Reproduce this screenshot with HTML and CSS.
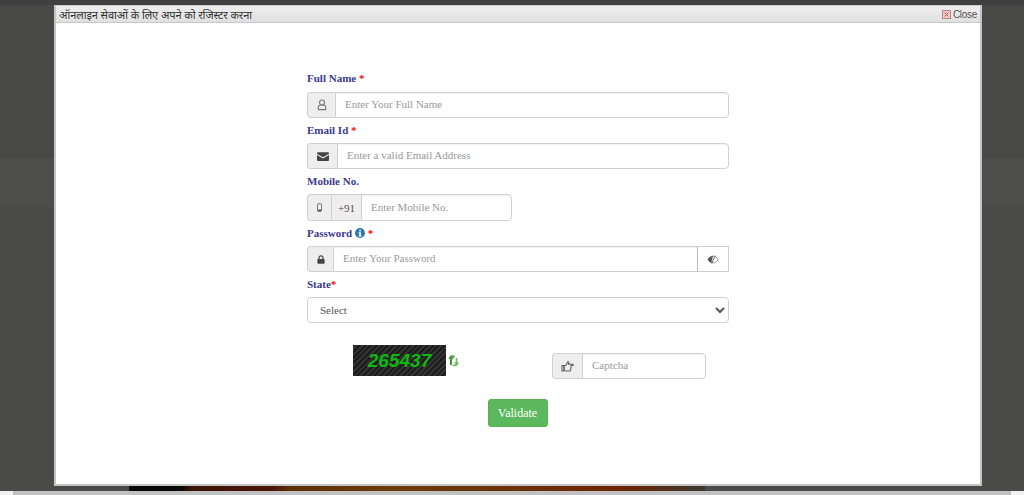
FILE: index.html
```html
<!DOCTYPE html>
<html lang="hi">
<head>
<meta charset="utf-8">
<title>Register</title>
<link rel="stylesheet" href="styles.css">
</head>
<body>
<div class="backdrop">
  <div class="band band-top"></div>
  <div class="band band-mid"></div>
  <div class="band band-low"></div>
  <div class="strip"></div>
</div>
<div class="scrollbar"><div class="scroll-thumb"></div></div>
<div class="modal">
  <div class="modal-title">
    <span class="modal-heading">ऑनलाइन सेवाओं के लिए अपने को रजिस्टर करना</span>
    <span class="modal-close">
      <svg class="close-icon" viewBox="0 0 9 9" width="9" height="9"><rect x="0.5" y="0.5" width="8" height="8" fill="#f3c9c9" stroke="#b08a8a"/><path d="M2.5 2.5l4 4M6.500 2.500l-4 4" stroke="#b55" fill="none"/></svg>
      <span>Close</span>
    </span>
  </div>
  <form class="form">
    <label class="label label-first">Full Name <em>*</em></label>
    <div class="group">
      <span class="addon addon-user"><svg viewBox="0 0 12 14" width="10" height="12"><circle cx="6" cy="4" r="3" fill="none" stroke="#777" stroke-width="1.300"/><path d="M1.500 12.500v-2.500a3 3 0 0 1 3-3h3a3 3 0 0 1 3 3v2.500z" fill="none" stroke="#777" stroke-width="1.300" stroke-linejoin="round"/></svg></span>
      <input class="field" placeholder="Enter Your Full Name">
    </div>
    <label class="label">Email Id <em>*</em></label>
    <div class="group">
      <span class="addon addon-mail"><svg viewBox="0 0 12 9" width="12" height="9"><path d="M0 1.200a1 1 0 0 1 1-1h10a1 1 0 0 1 1 1v.5L6 5.300 0 1.700zM0 3l6 3.600L12 3v5a1 1 0 0 1-1 1H1a1 1 0 0 1-1-1z" fill="#444"/></svg></span>
      <input class="field" placeholder="Enter a valid Email Address">
    </div>
    <label class="label">Mobile No.</label>
    <div class="group group-mobile">
      <span class="addon addon-phone"><svg viewBox="0 0 6 10" width="5" height="9"><rect x="0.500" y="0.500" width="5" height="9" rx="1" fill="none" stroke="#555"/><rect x="1" y="7.500" width="4" height="2" fill="#555"/></svg></span>
      <span class="addon addon-code">+91</span>
      <input class="field" placeholder="Enter Mobile No.">
    </div>
    <label class="label">Password <svg class="info" viewBox="0 0 10 10" width="10" height="10"><circle cx="5" cy="5" r="5" fill="#2f76b5"/><rect x="4.200" y="1.700" width="1.700" height="1.600" fill="#fff"/><path d="M3.500 4.200h2.400v3.200h.7v1H3.500v-1h.7V5.200h-.7z" fill="#fff"/></svg> <em>*</em></label>
    <div class="group">
      <span class="addon addon-lock"><svg viewBox="0 0 10 11" width="8" height="9"><path d="M2.500 5V3.500a2.500 2.500 0 0 1 5 0V5" fill="none" stroke="#444" stroke-width="1.500"/><rect x="0.500" y="4.800" width="9" height="6" rx="1" fill="#444"/></svg></span>
      <input class="field field-pass" placeholder="Enter Your Password">
      <span class="addon-eye"><svg viewBox="0 0 14 10" width="12" height="9"><path d="M1 5c1.500-2.500 3.500-4 6-4s4.500 1.500 6 4c-1.500 2.500-3.500 4-6 4S2.500 7.500 1 5z" fill="none" stroke="#888"/><path d="M1 5c1.500-2.500 3-4 6-4L5 9C3.500 8.500 2 7 1 5z" fill="#555"/><path d="M9.500 0.500L5.500 9.500" stroke="#555"/></svg></span>
    </div>
    <label class="label">State<em>*</em></label>
    <select class="select"><option>Select</option></select>
    <div class="captcha-row">
      <div class="captcha-pic">
        <span class="captcha-img">265437</span>
        <svg class="refresh" viewBox="0 0 11 13" width="11" height="13"><path d="M6.500 2.500H4.300Q3 2.500 3 3.800V11" fill="none" stroke="#3f9a33" stroke-width="2"/><path d="M0.800 5L3 2l2.200 3" fill="none" stroke="#3f9a33" stroke-width="1.200"/><path d="M4.500 11.500h2q2 0 2-1.500V4" fill="none" stroke="#6bb561" stroke-width="1.500"/><path d="M6.500 8.200l2 2.800 2-2.800" fill="none" stroke="#6bb561" stroke-width="1.200"/></svg>
      </div>
      <div class="group group-captcha">
        <span class="addon addon-thumb"><svg viewBox="0 0 14 12" width="13" height="11"><path d="M1 5h2v6H1zM3.500 5.500L6 4l1-3c1-.5 1.800.4 1.300 1.500L8 3.500h4.500c1 0 1 1.500 0 1.500H11l-.5 4.800c-.1.800-.6 1.200-1.200 1.200H5.500l-2-1z" fill="none" stroke="#555" stroke-width="1.100" stroke-linejoin="round"/></svg></span>
        <input class="field" placeholder="Captcha">
      </div>
    </div>
    <div class="actions"><button type="button" class="btn">Validate</button></div>
  </form>
</div>
</body>
</html>
```
FILE: styles.css
```css
* { box-sizing: border-box; }
html, body { margin: 0; height: 495px; overflow: hidden; }
body {
  background: #494947;
  font-family: "Liberation Serif", serif;
  font-size: 11px;
  padding: 5px 42px 0 54px;
}
.backdrop { position: fixed; inset: 0; background: #484846; }
.band { position: absolute; left: 0; right: 0; }
.band-top { top: 0; height: 5px; background: #404040; }
.band-mid { top: 158px; height: 48px; background: #4d4d4c; }
.band-low { top: 206px; bottom: 0; background: #4a4a49; }
.strip {
  position: absolute; left: 129px; width: 576px; top: 486px; height: 5px;
  background: linear-gradient(90deg, #080806 0 9%, #3c1406 11%, #4a1606 25%, #5c3004 28%, #6a3c06 45%, #6a3206 65%, #6e2404 85%, #3a3a30 100%);
}
.scrollbar { position: fixed; left: 0; right: 0; top: 491px; height: 4px; background: #f1f1f1; padding: 0 13px; }
.scroll-thumb { height: 4px; background: #c1c1c1; }
.modal {
  position: relative;
  width: 928px;
  height: 481px;
  background: #fff;
  border: 2px solid #c4c4c4;
  border-top: 1px solid #ccc;
  display: flex;
  flex-direction: column;
}
.modal-title {
  height: 17px;
  flex: none;
  background: linear-gradient(#eee, #e0e0e0);
  border-bottom: 1px solid #c8c8c8;
  padding: 0 3px;
  display: flex;
  justify-content: space-between;
  align-items: center;
  font-family: "Liberation Sans", "Noto Sans", sans-serif;
  color: #444;
}
.modal-heading { font-family: "Noto Sans", "Liberation Sans", sans-serif; font-size: 11px; letter-spacing: -0.08px; color: #333; }
.modal-close { display: flex; align-items: center; gap: 2px; font-size: 10px; color: #555; letter-spacing: -0.3px; }
.close-icon { display: block; }
.form {
  width: 422px;
  margin: 49px 0 0 251px;
  display: flex;
  flex-direction: column;
  color: #333;
}
.label {
  display: block;
  height: 19px;
  margin-top: 6px;
  line-height: 13px;
  font-weight: bold;
  font-size: 11px;
  color: #3a3a8e;
}
.label-first { margin-top: 0; height: 20px; }
.label em { color: #f00; font-style: normal; }
.info { vertical-align: -1px; }
.group { display: flex; height: 26px; }
.addon {
  flex: none;
  display: flex;
  align-items: center;
  justify-content: center;
  background: #eee;
  border: 1px solid #d0d0d0;
  border-right: 0;
  color: #555;
  border-radius: 4px 0 0 4px;
}
.addon-user { width: 28px; }
.addon-mail { width: 30px; }
.addon-phone { width: 24px; }
.addon-code { width: 30px; border-radius: 0; font-size: 11px; }
.addon-lock { width: 26px; }
.addon-thumb { width: 30px; }
.field {
  flex: 1;
  min-width: 0;
  height: 100%;
  border: 1px solid #d0d0d0;
  border-radius: 0 4px 4px 0;
  padding: 0 9px 2px;
  font: 11px "Liberation Serif", serif;
  color: #555;
  background: #fff;
  outline: 0;
  box-shadow: inset 0 1px 1px rgba(0,0,0,.06);
}
.field::placeholder { color: #999; opacity: 1; }
.field-pass { border-radius: 0; border-right-color: #bbb; }
.addon-eye {
  width: 31px;
  flex: none;
  display: flex;
  align-items: center;
  justify-content: center;
  border: 1px solid #d0d0d0;
  border-left: 0;
}
.group-mobile { width: 205px; height: 27px; }
.group-captcha { width: 154px; margin-top: 8px; }
.select {
  height: 26px;
  width: 100%;
  border: 1px solid #d0d0d0;
  border-radius: 4px;
  background: #fff;
  padding: 0 8px 1px;
  font: 11px "Liberation Serif", serif;
  color: #555;
}
.captcha-row { display: flex; margin-top: 22px; height: 54px; }
.captcha-pic { width: 245px; padding-left: 46px; display: flex; gap: 2px; align-items: center; height: 31px; }
.captcha-img {
  width: 93px;
  height: 31px;
  flex: none;
  display: flex;
  align-items: center;
  justify-content: center;
  background: repeating-linear-gradient(135deg, #1c1c1c 0 2px, #333 2px 4px);
  color: #0fb80f;
  font: italic bold 19px "Liberation Sans", sans-serif;
}
.refresh { display: block; }
.actions { display: flex; justify-content: center; padding-right: 1px; }
.btn {
  width: 60px;
  height: 28px;
  background: #5cb85c;
  border: 1px solid #55b355;
  border-radius: 3px;
  color: #fff;
  font: 12px "Liberation Serif", serif;
  padding: 0;
}
```
